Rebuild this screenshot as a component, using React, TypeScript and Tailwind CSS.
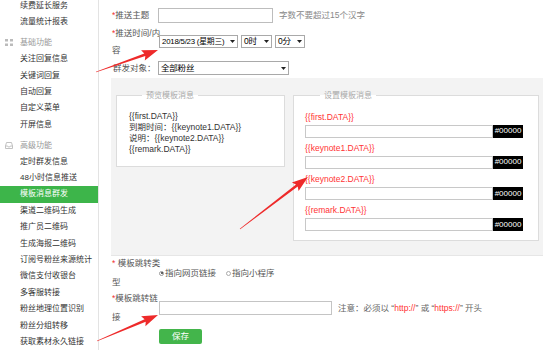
import React from 'react';

const menu: {t: string; head?: 'grid' | 'box'; active?: boolean}[] = [
  {t: '续费延长服务'},
  {t: '流量统计报表'},
  {t: '基础功能', head: 'grid'},
  {t: '关注回复信息'},
  {t: '关键词回复'},
  {t: '自动回复'},
  {t: '自定义菜单'},
  {t: '开屏信息'},
  {t: '高级功能', head: 'box'},
  {t: '定时群发信息'},
  {t: '48小时信息推送'},
  {t: '模板消息群发', active: true},
  {t: '渠道二维码生成'},
  {t: '推广员二维码'},
  {t: '生成海报二维码'},
  {t: '订阅号粉丝来源统计'},
  {t: '微信支付收银台'},
  {t: '多客服转接'},
  {t: '粉丝地理位置识别'},
  {t: '粉丝分组转移'},
  {t: '获取素材永久链接'},
];

const fields = ['{{first.DATA}}', '{{keynote1.DATA}}', '{{keynote2.DATA}}', '{{remark.DATA}}'];

function arrowPoints(x1: number, y1: number, x2: number, y2: number) {
  const dx = x2 - x1;
  const dy = y2 - y1;
  const len = Math.hypot(dx, dy);
  const ux = dx / len;
  const uy = dy / len;
  const nx = -uy;
  const ny = ux;
  const head = 14;
  const bx = x2 - ux * head;
  const by = y2 - uy * head;
  const pts = [
    [x1 + nx * 0.3, y1 + ny * 0.3],
    [bx + nx * 1.4, by + ny * 1.4],
    [bx - ux * 2 + nx * 5.5, by - uy * 2 + ny * 5.5],
    [x2, y2],
    [bx - ux * 2 - nx * 5.5, by - uy * 2 - ny * 5.5],
    [bx - nx * 1.4, by - ny * 1.4],
    [x1 - nx * 0.3, y1 - ny * 0.3],
  ];
  return pts.map((p) => `${p[0].toFixed(1)},${p[1].toFixed(1)}`).join(' ');
}

function Caret() {
  return (
    <svg width="5" height="3" viewBox="0 0 5 3" className="shrink-0">
      <polygon points="0,0 5,0 2.5,3" fill="#222" />
    </svg>
  );
}

function Select({className, text}: {className: string; text: string}) {
  return (
    <div className={`flex items-center justify-between overflow-hidden border border-[#a9a9a9] bg-white pl-[2px] pr-[2px] ${className}`}>
      <span className="whitespace-nowrap leading-none tracking-[-0.2px] text-black">{text}</span>
      <Caret />
    </div>
  );
}

function Star() {
  return <span className="text-[#f03030]">*</span>;
}

export default function App() {
  return (
    <div className="relative h-[350px] w-[558px] overflow-hidden bg-white font-['Liberation_Sans','Noto_Sans_CJK_SC',sans-serif] text-[8.5px] text-[#555]">
      <div className="flex">
        <aside className="w-[99px] shrink-0 border-r border-[#e3e3e3]">
          <div className="-mt-[2.2px]">
            {menu.map((m) =>
              m.head ? (
                <div key={m.t} className="mt-[4.2px] flex h-[16.4px] items-center text-[8px] text-[#999]">
                  <span className="flex w-[20px] justify-center pr-[3px]">
                    {m.head === 'grid' ? (
                      <svg width="8" height="7" viewBox="0 0 8 7">
                        <rect x="0" y="0" width="3" height="2.5" fill="#bbb" />
                        <rect x="5" y="0" width="3" height="2.5" fill="#bbb" />
                        <rect x="0" y="4.5" width="3" height="2.5" fill="#bbb" />
                        <rect x="5" y="4.5" width="3" height="2.5" fill="#bbb" />
                      </svg>
                    ) : (
                      <svg width="8" height="7" viewBox="0 0 8 7">
                        <path d="M1.5 0.5h5l1 3.5v2.5h-7V4z M0.5 4h2.2l0.6 1h1.4l0.6-1h2.2" fill="none" stroke="#bbb" strokeWidth="0.9" />
                      </svg>
                    )}
                  </span>
                  {m.t}
                </div>
              ) : (
                <div
                  key={m.t}
                  className={`h-[16.4px] pl-[20px] text-[8px] leading-[16.4px] ${m.active ? 'bg-[#3db54a] text-white' : 'text-[#333]'}`}
                >
                  {m.t}
                </div>
              ),
            )}
          </div>
        </aside>

        <main className="flex-1 pl-[12px] pt-[8px]">
          <div className="flex h-[15px] items-center">
            <div className="w-[47px] pl-[1px] whitespace-nowrap">
              <Star />推送主题
            </div>
            <div className="h-[15px] w-[115px] border border-[#bdbdbd] bg-white" />
            <span className="ml-[6px] text-[#888]">字数不要超过15个汉字</span>
          </div>

          <div className="mt-[1.5px] flex h-[34px] items-center">
            <div className="w-[48px] pl-[1px] whitespace-nowrap leading-[17px]">
              <Star />推送时间/内
              <br />容
            </div>
            <div className="flex gap-[3px]">
              <Select className="h-[13px] w-[79px] text-[7.8px]" text="2018/5/23 (星期三)" />
              <Select className="h-[13px] w-[31px] text-[8.5px]" text="0时" />
              <Select className="h-[13px] w-[30px] text-[8.5px]" text="0分" />
            </div>
          </div>

          <div className="flex h-[19px] items-center">
            <div className="w-[47px] pl-[2px] whitespace-nowrap">群发对象：</div>
            <Select className="h-[14px] w-[131px] text-[8.5px]" text="全部粉丝" />
          </div>

          <section className="flex w-[432px] items-start gap-[8px] border-b border-[#e6e6e6] bg-[#f3f3f3] pb-[14px] pl-[5px] pr-[4px] pt-[12px]">
            <fieldset className="h-[77px] w-[169px] border border-[#dcdcdc] bg-white pb-[7px] pl-[12px] pt-[9px]">
              <legend className="ml-[13px] px-[4px] text-[8px] leading-[12px] text-[#aaa]">预览模板消息</legend>
              <div className="leading-[11px] text-[#333]">
                <div>{'{{first.DATA}}'}</div>
                <div>到期时间：{'{{keynote1.DATA}}'}</div>
                <div>说明：{'{{keynote2.DATA}}'}</div>
                <div>{'{{remark.DATA}}'}</div>
              </div>
            </fieldset>

            <fieldset className="h-[151px] flex-1 border border-[#dcdcdc] bg-white pl-[11px] pr-[15px] pt-[8px]">
              <legend className="ml-[15px] px-[4px] text-[8px] leading-[12px] text-[#aaa]">设置模板消息</legend>
              {fields.map((f, i) => (
                <div key={f} className={i === 0 ? '' : 'mt-[3.3px]'}>
                  <div className="leading-[14px] text-[#f33]">{f}</div>
                  <div className="mt-[1px] flex h-[13px]">
                    <div className="flex-1 border border-[#c8c8c8] bg-white" />
                    <div className="flex w-[30px] items-center justify-center bg-black text-[8px] text-white">#00000</div>
                  </div>
                </div>
              ))}
            </fieldset>
          </section>

          <div className="flex h-[35px] items-center">
            <div className="w-[48px] pl-[1px] whitespace-nowrap leading-[19px]">
              <Star /> 模板跳转类
              <br />型
            </div>
            <label className="flex items-center">
              <span className="mr-[1px] flex h-[5px] w-[5px] items-center justify-center rounded-full border border-[#999]">
                <span className="h-[2px] w-[2px] rounded-full bg-[#333]" />
              </span>
              指向网页链接
            </label>
            <label className="ml-[10px] flex items-center">
              <span className="mr-[1px] h-[5px] w-[5px] rounded-full border border-[#aaa]" />
              指向小程序
            </label>
          </div>

          <div className="flex h-[35px] items-center">
            <div className="w-[48px] pl-[1px] whitespace-nowrap leading-[19px]">
              <Star />模板跳转链
              <br />接
            </div>
            <div className="h-[14px] w-[173px] border border-[#c4c4c4] bg-white" />
            <span className="ml-[6px] whitespace-pre text-[#666]">
              注意：必须以 “<span className="text-[#f33]">http://</span>” 或 “<span className="text-[#f33]">https://</span>” 开头
            </span>
          </div>

          <button className="ml-[48px] mt-[3px] flex h-[15px] w-[43px] items-center justify-center rounded-[2px] bg-[#43b54b] text-[8.5px] text-white">
            保存
          </button>
        </main>
      </div>

      <svg className="pointer-events-none absolute left-0 top-0" width="558" height="350" viewBox="0 0 558 350">
        <polygon points={arrowPoints(96, 72, 158, 50)} fill="#ee2a2a" />
        <polygon points={arrowPoints(240, 229, 308, 177)} fill="#ee2a2a" />
        <polygon points={arrowPoints(97, 341, 158, 315)} fill="#ee2a2a" />
      </svg>
    </div>
  );
}
